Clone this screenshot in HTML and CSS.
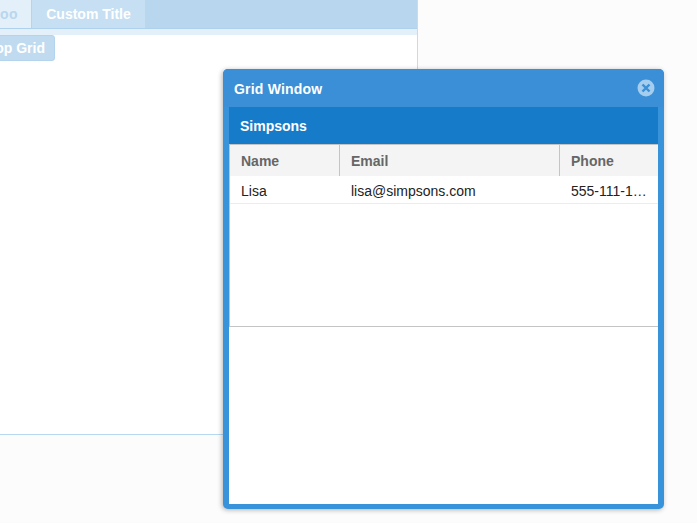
FILE: index.html
```html
<!DOCTYPE html>
<html lang="en">
<head>
  <meta charset="UTF-8">
  <title>Grid Window</title>
  <link rel="stylesheet" href="styles.css">
</head>
<body>
  <div class="viewport">
    <div class="panel">
      <div class="tabbar">
        <div class="tab tab-first"><span class="tab-text">Foo</span></div>
        <div class="tab tab-active">Custom Title</div>
      </div>
      <div class="tabstrip"></div>
      <div class="panel-body">
        <button class="stop-button" type="button">Stop Grid</button>
      </div>
    </div>
  </div>

  <div class="window">
    <div class="window-header">
      <span class="window-title">Grid Window</span>
      <svg class="window-close" width="18" height="18" viewBox="0 0 18 18">
        <circle cx="9" cy="9" r="8.5" fill="#a4cdee"/>
        <path d="M5.5 5.5 L12.5 12.5 M12.5 5.5 L5.5 12.5" stroke="#3a8fd6" stroke-width="2.4" fill="none"/>
      </svg>
    </div>
    <div class="window-body">
      <div class="grid-title">Simpsons</div>
      <div class="grid">
        <div class="grid-head">
          <div class="col col-name">Name</div>
          <div class="col col-email">Email</div>
          <div class="col col-phone">Phone</div>
        </div>
        <div class="grid-row">
          <div class="cell col-name">Lisa</div>
          <div class="cell col-email">lisa@simpsons.com</div>
          <div class="cell col-phone">555-111-1224</div>
        </div>
      </div>
    </div>
  </div>
</body>
</html>
```

FILE: styles.css
```css
html, body {
  margin: 0;
  padding: 0;
  width: 100%;
  height: 100%;
  overflow: hidden;
  background-color: #fcfcfc;
  font-family: "Liberation Sans", Arial, sans-serif;
}

.viewport {
  width: 418px;
  height: 435px;
  overflow: hidden;
}

.panel {
  display: flex;
  flex-direction: column;
  height: 100%;
  box-sizing: border-box;
  border-right: 1px solid #c3dcf0;
  border-bottom: 1px solid #b6d9f0;
  background-color: white;
}

.tabbar {
  display: flex;
  height: 29px;
  box-sizing: border-box;
  background-color: #b8d7ef;
  border-bottom: 1px solid #aed2ed;
  flex: none;
}

.tab {
  display: flex;
  align-items: center;
  height: 28px;
  font-size: 14px;
  font-weight: bold;
  color: white;
}

.tab-first {
  width: 32px;
  box-sizing: border-box;
  background-color: #e4f0f9;
  border-right: 1px solid #b4d5ee;
  overflow: hidden;
  justify-content: flex-end;
  color: #b8d7ef;
}

.tab-text {
  padding-right: 13px;
  white-space: nowrap;
  letter-spacing: 0.5px;
}

.tab-active {
  width: 113px;
  box-sizing: border-box;
  justify-content: center;
  background-color: #c6dff2;
}

.tabstrip {
  height: 6px;
  background-color: #e4f0f9;
  flex: none;
}

.panel-body {
  flex: 1;
}

.stop-button {
  display: block;
  margin-left: -25px;
  width: 80px;
  height: 26px;
  padding: 0 9px 0 0;
  text-align: right;
  border: 1px solid #b3d4ec;
  border-radius: 3px;
  background-color: #c0dbf0;
  color: white;
  font-family: inherit;
  font-size: 14px;
  font-weight: bold;
}

.window {
  position: absolute;
  left: 223px;
  top: 69px;
  width: 441px;
  height: 440px;
  display: flex;
  flex-direction: column;
  box-sizing: border-box;
  padding: 0 6px 5px;
  background-color: #3893da;
  border-radius: 5px;
  box-shadow: -1px 1px 5px rgba(0, 0, 0, 0.3);
}

.window-header {
  display: flex;
  align-items: center;
  justify-content: space-between;
  height: 38px;
  margin: 0 -6px;
  flex: none;
  box-sizing: border-box;
  padding: 0 9px 0 11px;
  background-color: #3a8fd6;
  border-radius: 5px 5px 0 0;
}

.window-title {
  padding-top: 2px;
  font-size: 14px;
  font-weight: bold;
  letter-spacing: 0.2px;
  color: white;
}

.window-close {
  display: block;
}

.window-body {
  flex: 1;
  background-color: white;
}

.grid-title {
  height: 37px;
  line-height: 39px;
  padding-left: 11px;
  background-color: #167cc9;
  color: white;
  font-size: 14px;
  font-weight: bold;
}

.grid {
  height: 183px;
  box-sizing: border-box;
  border-left: 1px solid #c4c4c4;
  border-bottom: 1px solid #c4c4c4;
  background-color: white;
}

.grid-head {
  display: flex;
  height: 32px;
  box-sizing: border-box;
  border-top: 1px solid #c4c4c4;
  background-color: #f4f4f4;
  color: #666;
  font-size: 14px;
  font-weight: bold;
}

.col {
  line-height: 32px;
  padding-left: 11px;
  box-sizing: border-box;
  border-right: 1px solid #c4c4c4;
}

.col-name {
  width: 110px;
}

.col-email {
  width: 220px;
}

.col-phone {
  width: 98px;
  border-right: none;
}

.grid-row {
  display: flex;
  height: 28px;
  box-sizing: border-box;
  border-bottom: 1px solid #ececec;
  color: #222;
  font-size: 14px;
}

.cell {
  line-height: 30px;
  padding: 0 11px;
  box-sizing: border-box;
  border: none;
  white-space: nowrap;
  overflow: hidden;
  text-overflow: ellipsis;
}

.cell.col-phone {
  padding-right: 6px;
}
```
